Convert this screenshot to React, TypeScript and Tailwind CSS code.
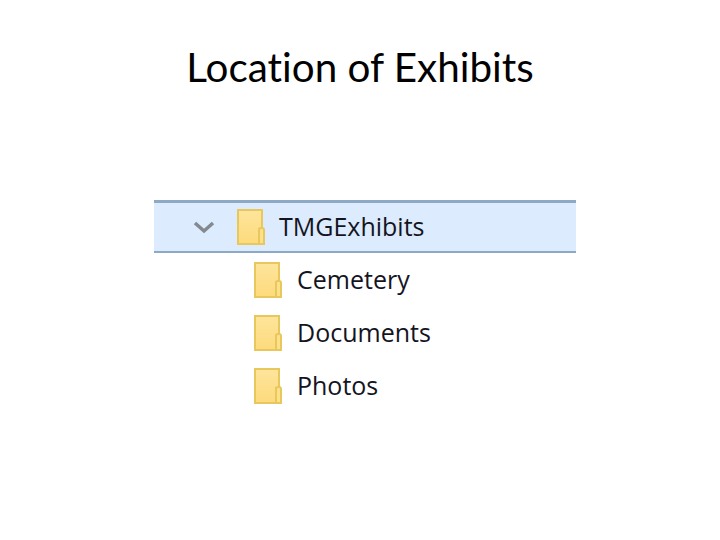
function Folder() {
  return (
    <svg width="29" height="37" viewBox="0 0 29 37" className="shrink-0">
      <defs>
        <linearGradient id="body" x1="0" y1="0" x2="0" y2="1">
          <stop offset="0" stopColor="#fee59c" />
          <stop offset="1" stopColor="#fdda7c" />
        </linearGradient>
      </defs>
      <rect x="1" y="1" width="24" height="34" fill="url(#body)" stroke="#e8c85c" strokeWidth="2" />
      <path d="M22 35V20q0-1 2-1h1q2 0 2 2v14z" fill="#fde08a" stroke="#e8c85c" strokeWidth="2" />
    </svg>
  );
}

const children = ["Cemetery", "Documents", "Photos"];

export default function App() {
  return (
    <div className="w-[720px] h-[540px] bg-white overflow-hidden">
      <h1 className="pt-[42px] h-[200px] text-center text-[40.4px] leading-[50px] text-black font-['Lato',sans-serif] [font-variant-ligatures:none]">
        Location of Exhibits
      </h1>
      <div className="ml-[154px] w-[422px] font-['Open_Sans',sans-serif] text-[25px] text-[#14141f]">
        <div className="flex items-center h-[53px] bg-[#dcebfd] border-t-[3px] border-b-2 border-[#8ea9c6]">
          <svg width="22" height="14" viewBox="0 0 22 14" className="ml-[39px] shrink-0">
            <path d="M2 3l9 8 9-8" fill="none" stroke="#84898f" strokeWidth="3.5" />
          </svg>
          <div className="ml-[22px] flex items-center">
            <Folder />
          </div>
          <span className="ml-[13px]">TMGExhibits</span>
        </div>
        {children.map((name) => (
          <div key={name} className="flex items-center h-[53px] pl-[100px] pt-[1px]">
            <Folder />
            <span className="ml-[14px]">{name}</span>
          </div>
        ))}
      </div>
    </div>
  );
}
